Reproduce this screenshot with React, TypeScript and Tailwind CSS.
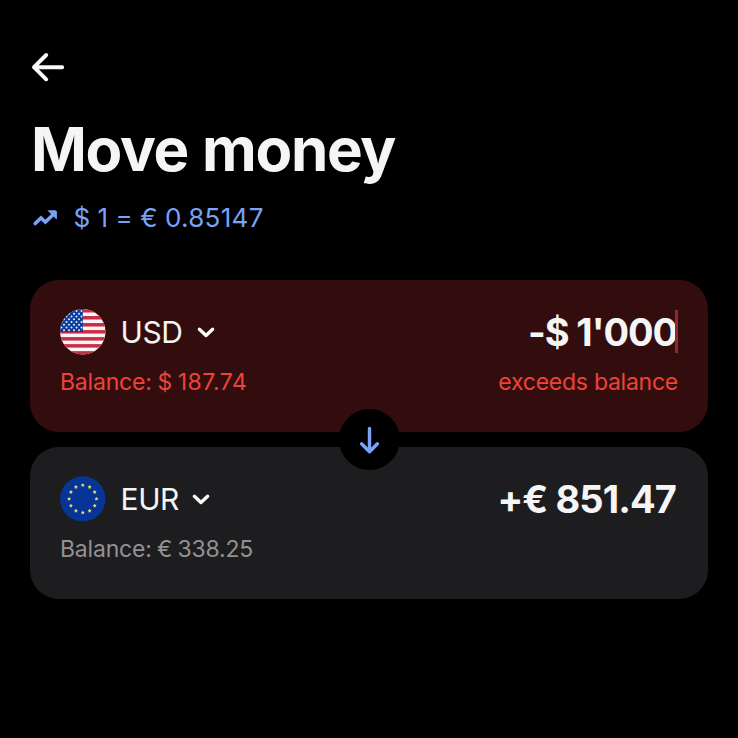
import React from "react";

function BackArrow() {
  return (
    <svg className="block h-[32px] w-[36px]" viewBox="0 0 36 32" fill="none" stroke="#fafafa" strokeWidth="3.9" strokeLinecap="round" strokeLinejoin="round">
      <path d="M32.2 16.2H4M16.2 4L4 16.2L16.2 28.3" />
    </svg>
  );
}

function TrendIcon() {
  return (
    <svg className="block h-[20px] w-[26px] shrink-0" viewBox="0 0 26 20">
      <path d="M3.2 15.6L9 10L13.4 14L20.2 7.4" fill="none" stroke="#7aa2f7" strokeWidth="3.5" strokeLinecap="round" strokeLinejoin="miter" />
      <path d="M16.2 2.7H23.2Q24.5 2.7 24.5 4V11Z" fill="#7aa2f7" stroke="#7aa2f7" strokeWidth="0.8" strokeLinejoin="round" />
    </svg>
  );
}

function Chevron() {
  return (
    <svg className="block h-[14px] w-[20px]" viewBox="0 0 20 14" fill="none" stroke="#fafafa" strokeWidth="3.4" strokeLinecap="round" strokeLinejoin="round">
      <path d="M3.4 4.2L10 10.4L16.6 4.2" />
    </svg>
  );
}

function UsFlag() {
  const stars: React.ReactNode[] = [];
  for (let row = 0; row < 8; row++) {
    for (let col = 0; col < 5; col++) {
      stars.push(<circle key={`${row}-${col}`} cx={1.5 + col * 5 + (row % 2) * 2.5} cy={2 + row * 2.75} r="1" fill="#e4edfa" />);
    }
  }
  return (
    <svg className="block size-[46px]" viewBox="0 0 46 46">
      <defs>
        <clipPath id="us-round"><circle cx="22.8" cy="22.8" r="22.7" /></clipPath>
        <clipPath id="us-canton"><rect width="22.8" height="23" /></clipPath>
      </defs>
      <g clipPath="url(#us-round)">
        <rect width="46" height="46" fill="#fcf5f7" />
        {[0, 1, 2, 3, 4, 5, 6].map((i) => (
          <rect key={i} y={i * 7.02} width="46" height="3.51" fill="#c92f42" />
        ))}
        <rect width="22.8" height="23" fill="#0a3d9c" />
        <g clipPath="url(#us-canton)">{stars}</g>
      </g>
    </svg>
  );
}

function EuFlag() {
  const star = Array.from({ length: 10 }, (_, i) => {
    const r = i % 2 ? 1.15 : 2;
    const a = (i * Math.PI) / 5;
    return `${(r * Math.sin(a)).toFixed(2)},${(-r * Math.cos(a)).toFixed(2)}`;
  }).join(" ");
  return (
    <svg className="block size-[46px]" viewBox="0 0 46 46">
      <circle cx="22.8" cy="22.9" r="22.7" fill="#073597" />
      {Array.from({ length: 12 }, (_, i) => {
        const a = (i * Math.PI) / 6;
        return <polygon key={i} points={star} fill="#dfd67c" transform={`translate(${22.8 + 13.7 * Math.sin(a)} ${22.9 - 13.7 * Math.cos(a)})`} />;
      })}
    </svg>
  );
}

export default function App() {
  return (
    <main className="h-[738px] w-[738px] overflow-hidden bg-black px-[30px] pt-[51px] font-['Inter',sans-serif] text-[#f5f5f5]">
      <button aria-label="Back" className="block h-[32px]"><BackArrow /></button>
      <h1 className="mt-[30px] ml-[1px] h-[72px] text-[60px] leading-[72px] font-bold tracking-[-1.3px] whitespace-nowrap [word-spacing:1px]">Move money</h1>
      <div className="mt-[17px] flex h-[32px] items-center pl-[2px] text-[26px] leading-[32px] whitespace-nowrap text-[#7aa2f7]">
        <TrendIcon />
        <span className="ml-[15.5px] tracking-[0.3px] [word-spacing:-0.5px]">$ 1 = € 0.85147</span>
      </div>

      <div className="relative mt-[46px] flex w-[678px] flex-col gap-[15px]">
        <section className="h-[152px] rounded-[29px] bg-[#330d0e] px-[30px] pt-[29px]">
          <div className="flex h-[46px] items-center justify-between">
            <button className="flex items-center">
              <UsFlag />
              <span className="ml-[14.5px] text-[30px] leading-[46px] tracking-[-0.4px]">USD</span>
              <span className="ml-[13px]"><Chevron /></span>
            </button>
            <div className="relative text-[38px] leading-[46px] font-bold tracking-[-1.1px] whitespace-nowrap">
              <span className="mr-[1px]">-$ 1'000</span>
              <i className="absolute top-[1px] right-0 h-[43px] w-[3px] bg-[#92292c]" />
            </div>
          </div>
          <div className="mt-[12px] flex justify-between text-[23px] leading-[30px] text-[#ed4339]">
            <span className="tracking-[-0.2px] [word-spacing:-0.5px]">Balance: $ <span className="tracking-[0.5px]">187.74</span></span>
            <span className="tracking-[-0.25px]">exceeds balance</span>
          </div>
        </section>
        <section className="h-[152px] rounded-[29px] bg-[#1d1d1f] px-[30px] pt-[29px]">
          <div className="flex h-[46px] items-center justify-between">
            <button className="flex items-center">
              <EuFlag />
              <span className="ml-[14.5px] text-[30px] leading-[46px] tracking-[-0.4px]">EUR</span>
              <span className="ml-[12.5px]"><Chevron /></span>
            </button>
            <div className="mr-[2px] text-[38px] leading-[46px] font-bold tracking-[-0.9px] whitespace-nowrap">+€ 851.47</div>
          </div>
          <div className="mt-[12px] text-[23px] leading-[30px] text-[#929294]">
            <span className="tracking-[-0.2px] [word-spacing:-0.9px]">Balance: € 338.25</span>
          </div>
        </section>
        <button aria-label="Swap direction" className="absolute top-[129px] left-[309px] flex size-[61px] items-center justify-center rounded-full bg-black">
          <svg className="block h-[30px] w-[24px]" viewBox="0 0 24 30" fill="none" stroke="#7aa2f7" strokeWidth="3.4" strokeLinecap="round" strokeLinejoin="round">
            <path d="M11.5 3.5V26.7M3.6 18.8L11.5 26.7L19.4 18.8" />
          </svg>
        </button>
      </div>
    </main>
  );
}
